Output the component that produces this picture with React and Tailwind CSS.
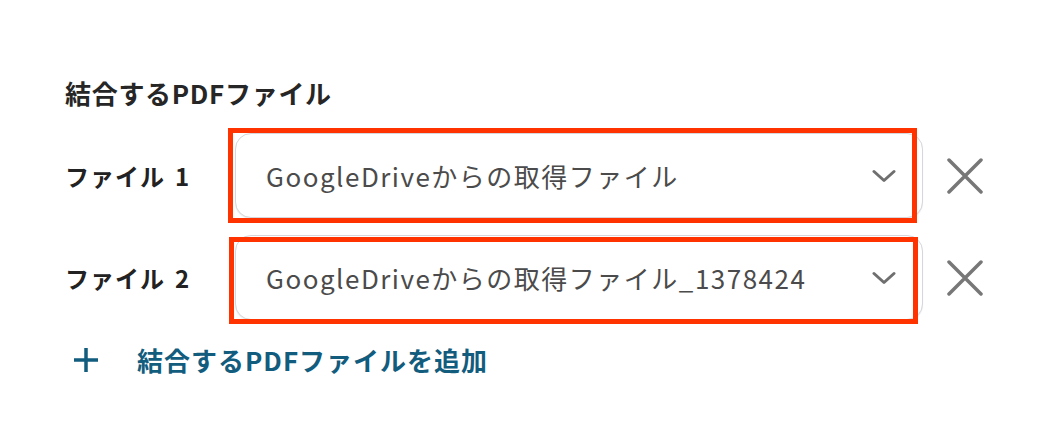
const FONT = { fontFamily: '"Noto Sans CJK JP", "Noto Sans", sans-serif' };

const FILES = [
  { no: 1, value: 'GoogleDriveからの取得ファイル', mark: 'left-[-7px] top-[-5px] right-[6px] bottom-[-5px]' },
  { no: 2, value: 'GoogleDriveからの取得ファイル_1378424', mark: 'left-[-6px] top-[2px] right-[5px] bottom-[-4px]' },
];

function Chevron() {
  return (
    <svg width="24" height="14" viewBox="0 0 24 14" fill="none">
      <path d="M2 2.5 L12 11.5 L22 2.5" stroke="#6f6f6f" strokeWidth="3" strokeLinecap="round" strokeLinejoin="round" />
    </svg>
  );
}

function Cross() {
  return (
    <svg width="36" height="36" viewBox="0 0 36 36" fill="none">
      <path d="M2 2 L34 34 M34 2 L2 34" stroke="#777" strokeWidth="3.5" strokeLinecap="round" />
    </svg>
  );
}

function Plus() {
  return (
    <svg width="26" height="26" viewBox="0 0 26 26" fill="none">
      <path d="M13 1 V25 M1 13 H25" stroke="#125c7e" strokeWidth="3.5" />
    </svg>
  );
}

export default function App() {
  return (
    <div className="w-[1062px] h-[424px] bg-white pl-[65px] pt-[77px]" style={FONT}>
      <h2 className="text-[26px] leading-[32px] font-bold tracking-[0.7px] text-[#262626]">結合するPDFファイル</h2>

      <div className="mt-[24px] flex flex-col gap-[17px]">
        {FILES.map(f => (
          <div key={f.no} className="flex items-center">
            <span className="w-[170px] shrink-0 text-[24px] font-bold tracking-[1px] text-[#222]">
              ファイル<span className="ml-[10px]">{f.no}</span>
            </span>
            <div className="relative w-[688px] h-[85px]">
              <div className="h-full flex items-center justify-between pl-[30px] pr-[26px] rounded-[16px] border-[1.5px] border-[#d6d6dc] bg-white shadow-[0_1px_1px_rgba(0,0,0,0.08)]">
                <span className="text-[26px] tracking-[1.5px] text-[#4b4b4b]">{f.value}</span>
                <Chevron />
              </div>
              <div className={`absolute border-[5px] border-[#ff3300] pointer-events-none ${f.mark}`} />
            </div>
            <button className="ml-[24px]"><Cross /></button>
          </div>
        ))}
      </div>

      <div className="mt-[20px] flex items-center">
        <span className="ml-[8px]"><Plus /></span>
        <span className="ml-[38px] text-[26px] font-bold tracking-[1px] text-[#125c7e]">結合するPDFファイルを追加</span>
      </div>
    </div>
  );
}
